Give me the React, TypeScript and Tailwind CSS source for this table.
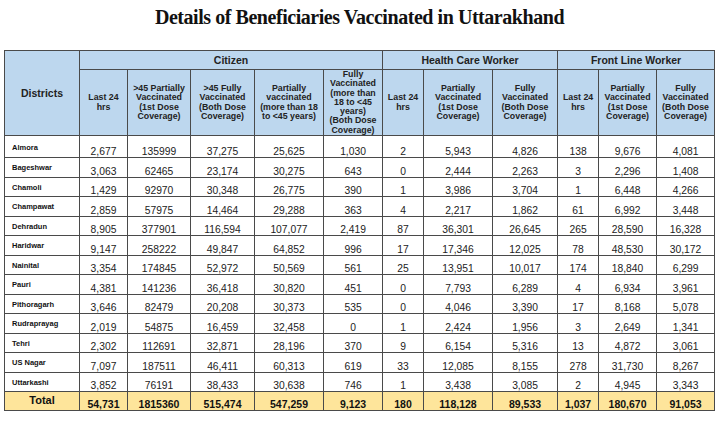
import React from "react";

const rows: string[][] = [
  ["Almora", "2,677", "135999", "37,275", "25,625", "1,030", "2", "5,943", "4,826", "138", "9,676", "4,081"],
  ["Bageshwar", "3,063", "62465", "23,174", "30,275", "643", "0", "2,444", "2,263", "3", "2,296", "1,408"],
  ["Chamoli", "1,429", "92970", "30,348", "26,775", "390", "1", "3,986", "3,704", "1", "6,448", "4,266"],
  ["Champawat", "2,859", "57975", "14,464", "29,288", "363", "4", "2,217", "1,862", "61", "6,992", "3,448"],
  ["Dehradun", "8,905", "377901", "116,594", "107,077", "2,419", "87", "36,301", "26,645", "265", "28,590", "16,328"],
  ["Haridwar", "9,147", "258222", "49,847", "64,852", "996", "17", "17,346", "12,025", "78", "48,530", "30,172"],
  ["Nainital", "3,354", "174845", "52,972", "50,569", "561", "25", "13,951", "10,017", "174", "18,840", "6,299"],
  ["Pauri", "4,381", "141236", "36,418", "30,820", "451", "0", "7,793", "6,289", "4", "6,934", "3,961"],
  ["Pithoragarh", "3,646", "82479", "20,208", "30,373", "535", "0", "4,046", "3,390", "17", "8,168", "5,078"],
  ["Rudraprayag", "2,019", "54875", "16,459", "32,458", "0", "1", "2,424", "1,956", "3", "2,649", "1,341"],
  ["Tehri", "2,302", "112691", "32,871", "28,196", "370", "9", "6,154", "5,316", "13", "4,872", "3,061"],
  ["US Nagar", "7,097", "187511", "46,411", "60,313", "619", "33", "12,085", "8,155", "278", "31,730", "8,267"],
  ["Uttarkashi", "3,852", "76191", "38,433", "30,638", "746", "1", "3,438", "3,085", "2", "4,945", "3,343"],
];

const totals = ["54,731", "1815360", "515,474", "547,259", "9,123", "180", "118,128", "89,533", "1,037", "180,670", "91,053"];

const subHeads: string[][] = [
  ["Last 24", "hrs"],
  [">45 Partially", "Vaccinated", "(1st Dose", "Coverage)"],
  [">45 Fully", "Vaccinated", "(Both Dose", "Coverage)"],
  ["Partially", "vaccinated", "(more than 18", "to <45 years)"],
  ["Fully", "Vaccinated", "(more than", "18 to <45", "years)", "(Both Dose", "Coverage)"],
  ["Last 24", "hrs"],
  ["Partially", "Vaccinated", "(1st Dose", "Coverage)"],
  ["Fully", "Vaccinated", "(Both Dose", "Coverage)"],
  ["Last 24", "hrs"],
  ["Partially", "Vaccinated", "(1st Dose", "Coverage)"],
  ["Fully", "Vaccinated", "(Both Dose", "Coverage)"],
];

const cell = "border border-[#4a4a4a]";

export default function App() {
  return (
    <div className="w-[719px] h-[435px] bg-white overflow-hidden">
      <h1 className="h-[50px] pt-[5px] text-center font-bold text-[20px] leading-[24px] tracking-[-0.45px] text-[#111] font-['Liberation_Serif','Times_New_Roman',serif]">
        Details of Beneficiaries Vaccinated in Uttarakhand
      </h1>
      <table className="ml-[4px] w-[710px] table-fixed border-collapse font-['Liberation_Sans',Arial,sans-serif] text-[#222]">
        <colgroup>
          <col className="w-[75px]" />
          <col className="w-[48px]" />
          <col className="w-[63px]" />
          <col className="w-[64px]" />
          <col className="w-[69px]" />
          <col className="w-[59px]" />
          <col className="w-[41px]" />
          <col className="w-[69px]" />
          <col className="w-[65px]" />
          <col className="w-[41px]" />
          <col className="w-[58px]" />
          <col className="w-[58px]" />
        </colgroup>
        <thead>
          <tr className="h-[19px] bg-[#bdd7ee]">
            <th rowSpan={2} className={`${cell} p-0 text-[10.5px] font-bold leading-[12px] text-center align-middle`}>
              Districts
            </th>
            <th colSpan={5} className={`${cell} p-0 text-[10.5px] font-bold leading-[12px] text-center`}>
              Citizen
            </th>
            <th colSpan={3} className={`${cell} p-0 text-[10.5px] font-bold leading-[12px] text-center`}>
              Health Care Worker
            </th>
            <th colSpan={3} className={`${cell} p-0 text-[10.5px] font-bold leading-[12px] text-center`}>
              Front Line Worker
            </th>
          </tr>
          <tr className="h-[66px] bg-[#bdd7ee]">
            {subHeads.map((lines, i) => (
              <th key={i} className={`${cell} p-0 text-[8.8px] font-bold leading-[9.3px] text-center align-middle whitespace-nowrap`}>
                {lines.map((l, j) => (
                  <div key={j}>{l}</div>
                ))}
              </th>
            ))}
          </tr>
        </thead>
        <tbody>
          {rows.map((r, i) => (
            <tr key={r[0]} className={i === 0 ? "h-[22px]" : "h-[19.5px]"}>
              <td className={`${cell} p-0 pl-[7px] pt-[1px] align-middle text-[7.5px] font-bold leading-[9px] text-[#111]`}>{r[0]}</td>
              {r.slice(1).map((v, j) => (
                <td key={j} className={`${cell} p-0 align-bottom text-center text-[10.3px] leading-[11px]`}>
                  {v}
                </td>
              ))}
            </tr>
          ))}
          <tr className="h-[19px] bg-[#fee59b]">
            <td className={`${cell} p-0 pb-[3px] text-center align-middle text-[11px] font-bold leading-[12px] text-[#111]`}>Total</td>
            {totals.map((v, j) => (
              <td key={j} className={`${cell} p-0 align-bottom text-center text-[10.5px] font-bold leading-[12px] text-[#111]`}>
                {v}
              </td>
            ))}
          </tr>
        </tbody>
      </table>
    </div>
  );
}
